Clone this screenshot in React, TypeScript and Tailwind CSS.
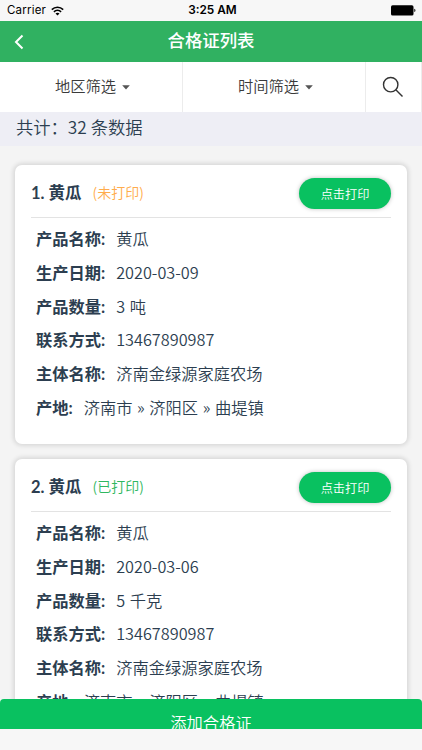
interface Certificate {
  id: number;
  product: string;
  printed: boolean;
  date: string;
  amount: string;
  phone: string;
  owner: string;
  origin: string;
}

const CERTIFICATES: Certificate[] = [
  {
    id: 1,
    product: "黄瓜",
    printed: false,
    date: "2020-03-09",
    amount: "3 吨",
    phone: "13467890987",
    owner: "济南金绿源家庭农场",
    origin: "济南市 » 济阳区 » 曲堤镇",
  },
  {
    id: 2,
    product: "黄瓜",
    printed: true,
    date: "2020-03-06",
    amount: "5 千克",
    phone: "13467890987",
    owner: "济南金绿源家庭农场",
    origin: "济南市 » 济阳区 » 曲堤镇",
  },
];

function StatusBar() {
  return (
    <div className="grid h-[21px] shrink-0 grid-cols-3 items-center bg-[#f7f7f7] px-[7px] font-['Inter','Liberation_Sans',sans-serif] text-[11.5px] font-normal text-black">
      <div className="flex items-center gap-[5px] pt-px">
        <span className="tracking-[0.2px]">Carrier</span>
        <svg width="13" height="10" viewBox="0 0 13 10" fill="none" stroke="black" strokeWidth="1.6">
          <path d="M0.8 3.6C4 0.5 9 0.5 12.2 3.6" />
          <path d="M2.9 5.9C5 3.9 8 3.9 10.1 5.9" />
          <path d="M4.5 7.5C5.6 6.5 7.4 6.5 8.5 7.5L6.5 9.5Z" fill="black" stroke="none" />
        </svg>
      </div>
      <span className="pl-[3px] pt-px text-center text-[11.8px] font-semibold">3:25 AM</span>
      <svg className="-mr-px justify-self-end" width="25" height="11" viewBox="0 0 25 11">
        <rect x="0" y="0.3" width="22.5" height="10.2" rx="1.6" />
        <path d="M23.3 3.7C24.8 4 24.8 6.8 23.3 7.1Z" />
      </svg>
    </div>
  );
}

function FilterButton({ label }: { label: string }) {
  return (
    <button type="button" className="flex flex-1 items-center justify-center gap-[6px] border-r border-[#ececec] pb-[4px] pl-[3px] text-[15.3px] text-[#3a3a3a]">
      {label}
      <svg className="mt-[5px]" width="8" height="5" viewBox="0 0 8 5" fill="#555555">
        <path d="M0.2 0.3H7.8L4 4.5Z" />
      </svg>
    </button>
  );
}

function Field({ label, value }: { label: string; value: string }) {
  return (
    <div className="flex h-[33.7px] items-center whitespace-nowrap">
      <span className="mr-[11px] font-['Lato','Noto_Sans_CJK_SC',sans-serif] font-bold">{label}:</span>
      <span className="pb-[2px] [word-spacing:1px]">{value}</span>
    </div>
  );
}

function CertificateCard({ item }: { item: Certificate }) {
  return (
    <article className="h-[279px] shrink-0 rounded-[7px] bg-white px-4 shadow-[0_0_4px_2px_rgba(0,0,0,0.11)]">
      <div className="flex h-[53px] items-center justify-between border-b border-[#e3e3e3] pt-[5px]">
        <div className="flex items-center">
          <h2 className="font-['Lato','Noto_Sans_CJK_SC',sans-serif] text-[16.5px] font-bold">
            {item.id}. {item.product}
          </h2>
          <span className={`ml-[11px] pb-[2px] text-[14px] ${item.printed ? "text-[#2fb760]" : "text-[#ffac4c]"}`}>
            ({item.printed ? "已打印" : "未打印"})
          </span>
        </div>
        <button type="button" className="h-[31px] w-[92px] rounded-full bg-[#09c160] pt-[2px] text-[12.2px] text-white shadow-[0_0_4px_rgba(0,0,0,0.25)]">
          点击打印
        </button>
      </div>
      <div className="px-[5px] pt-[4.5px] text-[16.25px]">
        <Field label="产品名称" value={item.product} />
        <Field label="生产日期" value={item.date} />
        <Field label="产品数量" value={item.amount} />
        <Field label="联系方式" value={item.phone} />
        <Field label="主体名称" value={item.owner} />
        <Field label="产地" value={item.origin} />
      </div>
    </article>
  );
}

export default function App() {
  return (
    <div className="flex h-[750px] w-[422px] flex-col overflow-hidden bg-[#f7f7f7] font-['Noto_Sans_CJK_SC',sans-serif] font-[350] text-[#2c3e50]">
      <StatusBar />
      <header className="grid h-[41px] shrink-0 grid-cols-[60px_1fr_60px] items-center bg-[#30b161] text-white">
        <button type="button" aria-label="返回" className="pl-[14px]">
          <svg width="10" height="16" viewBox="0 0 10 16" fill="none" stroke="white" strokeWidth="2">
            <path d="M8.5 1.5L2 8L8.5 14.5" />
          </svg>
        </button>
        <h1 className="pb-[3px] text-center text-[17.4px] font-medium">合格证列表</h1>
      </header>
      <div className="flex h-[50px] shrink-0 bg-white">
        <FilterButton label="地区筛选" />
        <FilterButton label="时间筛选" />
        <button type="button" aria-label="搜索" className="flex w-[56px] items-center justify-center border-r border-[#ececec] pr-px">
          <svg width="22" height="22" viewBox="0 0 22 22" fill="none" stroke="#333333" strokeWidth="1.4">
            <circle cx="8.7" cy="8.7" r="7.2" />
            <path d="M13.8 13.8L20.5 20.5" />
          </svg>
        </button>
      </div>
      <div className="flex h-[34px] shrink-0 items-center bg-[#eeeef5] pb-[4px] pl-4 text-[17.3px]">
        共计：32 条数据
      </div>
      <main className="flex min-h-0 flex-1 flex-col gap-[15px] overflow-hidden bg-[#f4f4f4] px-[15px] pt-[19px]">
        {CERTIFICATES.map((item) => (
          <CertificateCard key={item.id} item={item} />
        ))}
      </main>
      <button type="button" className="flex h-[30px] shrink-0 items-start justify-center overflow-hidden rounded-t-[4px] bg-[#09c160] pt-[11px] text-[16.3px] text-white">
        添加合格证
      </button>
      <div className="h-[21px] shrink-0 bg-[#f7f7f7]" />
    </div>
  );
}
